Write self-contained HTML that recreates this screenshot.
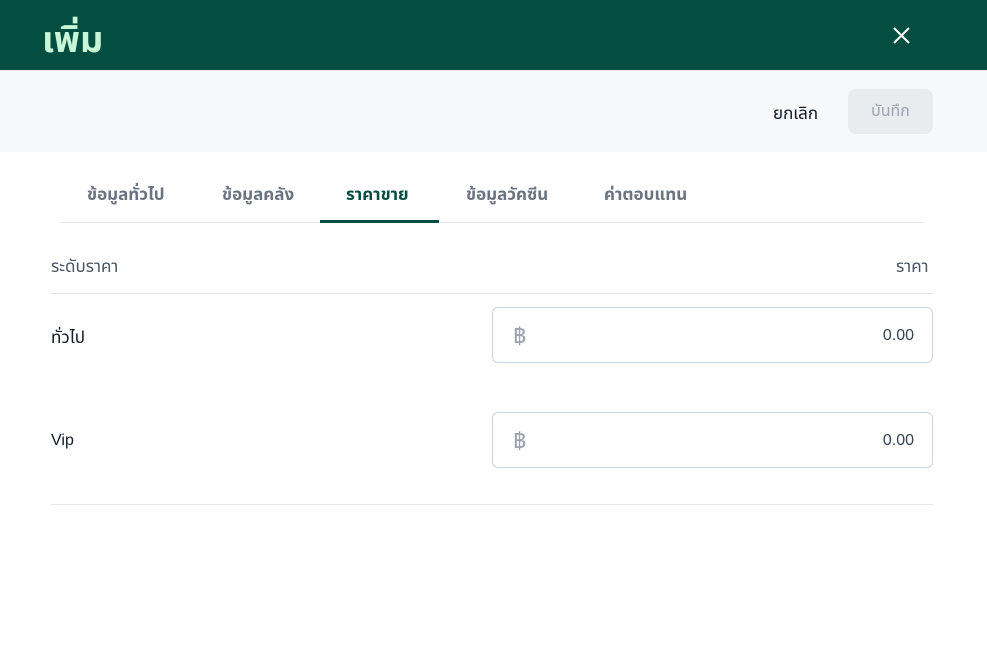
<!DOCTYPE html>
<html><head><meta charset="utf-8"><style>
*{margin:0;padding:0;box-sizing:border-box}
body{width:987px;height:655px;background:#fff;font-family:"Liberation Sans","Noto Sans Thai","DejaVu Sans",sans-serif;position:relative;overflow:hidden;color:#1f2937}
.hdr{position:absolute;left:0;top:0;width:987px;height:70px;background:#034e41}
.title{position:absolute;left:42px;top:18px;font-size:36px;font-weight:bold;color:#c6f6d5;line-height:44px}
.tb{position:absolute;left:0;top:70px;width:987px;height:82px;background:#f7f8fa;border-top:1px solid #e5e7eb}
.abs{position:absolute}
.tab{position:absolute;top:183px;font-size:17px;font-weight:bold;color:#6b7280;line-height:24px}
.inp{position:absolute;left:492px;width:441px;height:56px;border:1px solid #cbd5e1;border-radius:6px}
</style></head><body>
<div class="hdr"><div class="title">เพิ่ม</div>
<svg class="abs" style="left:893px;top:27px" width="17" height="17" viewBox="0 0 17 17"><path d="M1 1L16 16M16 1L1 16" stroke="#fff" stroke-width="2"/></svg></div>
<div class="tb">
<div class="abs" style="left:773px;top:30px;font-size:17px;color:#111827">ยกเลิก</div>
<div class="abs" style="left:848px;top:18px;width:85px;height:45px;background:#e9ecef;border-radius:8px;color:#9ca3af;font-size:16px;text-align:center;line-height:45px">บันทึก</div>
</div>
<div class="tab" style="left:87px">ข้อมูลทั่วไป</div>
<div class="tab" style="left:222px">ข้อมูลคลัง</div>
<div class="tab" style="left:346px;color:#034e41">ราคาขาย</div>
<div class="tab" style="left:466px">ข้อมูลวัคซีน</div>
<div class="tab" style="left:604px">ค่าตอบแทน</div>
<div class="abs" style="left:60px;top:222px;width:864px;height:1px;background:#e5e7eb"></div>
<div class="abs" style="left:320px;top:220px;width:119px;height:3px;background:#034e41"></div>
<div class="abs" style="left:51px;top:254px;font-size:17px;color:#4b5563">ระดับราคา</div>
<div class="abs" style="left:896px;top:254px;font-size:17px;color:#4b5563">ราคา</div>
<div class="abs" style="left:51px;top:293px;width:882px;height:1px;background:#e5e7eb"></div>
<div class="abs" style="left:51px;top:325px;font-size:17px;color:#111827">ทั่วไป</div>
<div class="inp" style="top:307px"><span class="abs" style="left:20px;top:13px;font-size:23px;color:#9ca3af">฿</span><span class="abs" style="right:18px;top:19px;font-size:16px;color:#374151">0.00</span></div>
<div class="abs" style="left:51px;top:432px;font-size:16px;color:#111827">Vip</div>
<div class="inp" style="top:412px"><span class="abs" style="left:20px;top:13px;font-size:23px;color:#9ca3af">฿</span><span class="abs" style="right:18px;top:19px;font-size:16px;color:#374151">0.00</span></div>
<div class="abs" style="left:51px;top:504px;width:882px;height:1px;background:#e5e7eb"></div>
</body></html>
